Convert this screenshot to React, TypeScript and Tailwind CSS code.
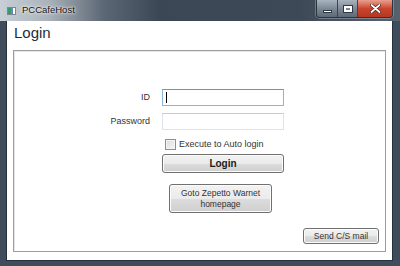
import React from "react";

const font = { fontFamily: '"Liberation Sans", Arial, sans-serif' };

function CaptionButtons() {
  return (
    <div className="absolute right-[7px] top-0 flex h-[18px] overflow-hidden rounded-b-[4px] border border-t-0 border-[#2b3540] shadow-[0_0_0_1px_rgba(255,255,255,0.25)]">
      <div className="flex w-[21px] items-end justify-center border-r border-[#3a4552] bg-gradient-to-b from-[#aab4be] via-[#7d8995] to-[#5d6a77] pb-[4px]">
        <div className="h-[3px] w-[9px] border border-[#2e3944] bg-white" />
      </div>
      <div className="flex w-[20px] items-center justify-center border-r border-[#3a4552] bg-gradient-to-b from-[#aab4be] via-[#7d8995] to-[#5d6a77]">
        <div className="h-[6px] w-[8px] border-2 border-white shadow-[0_0_0_1px_#2e3944]" />
      </div>
      <div className="flex w-[34px] items-center justify-center bg-gradient-to-b from-[#e7a08e] via-[#c9452f] to-[#b8361f]">
        <svg width="11" height="9" viewBox="0 0 11 9">
          <path d="M1.5 1 L9.5 8 M9.5 1 L1.5 8" stroke="#4a1a12" strokeWidth="3.2" strokeLinecap="round" />
          <path d="M1.5 1 L9.5 8 M9.5 1 L1.5 8" stroke="#ffffff" strokeWidth="1.8" strokeLinecap="round" />
        </svg>
      </div>
    </div>
  );
}

function Button({ className, children }: { className: string; children: React.ReactNode }) {
  return (
    <button
      className={`flex items-center justify-center rounded-[3px] border border-[#707070] bg-[linear-gradient(#f2f2f2_0%,#ebebeb_50%,#dddddd_50%,#cfcfcf_100%)] text-[#1a1a1a] shadow-[inset_0_0_0_1px_#fcfcfc] ${className}`}
    >
      {children}
    </button>
  );
}

export default function App() {
  return (
    <div
      style={font}
      className="relative flex h-[266px] w-[400px] flex-col overflow-hidden bg-[#3e4c5b]"
    >
      {/* title bar */}
      <div className="relative flex h-[21px] shrink-0 items-center bg-[linear-gradient(90deg,#c8cfd6_0%,#aab3bb_12%,#5b6774_26%,#3b4755_40%,#3d4957_75%,#56626e_100%)] pl-[7px]">
        <div className="flex h-[8px] w-[9px] border border-[#7d8790] bg-white">
          <div className="h-full w-[3px] bg-[#3c9a6a]" />
          <div className="h-full w-[2px] bg-[#5a8fc6]" />
        </div>
        <span className="ml-[6px] text-[9.5px] text-[#111] [text-shadow:0_0_4px_#ffffff,0_0_2px_#ffffff]">
          PCCafeHost
        </span>
        <CaptionButtons />
      </div>

      {/* client area */}
      <div className="ml-[7px] mr-[8px] mb-[6px] flex flex-1 flex-col bg-white shadow-[0_0_0_1px_#26313c]">
        <div className="pl-[7px] pt-[3px] text-[15px] leading-[18px] text-[#1e2c3a]">Login</div>

        <div className="mx-[6px] mb-[8px] mt-[8px] flex flex-1 flex-col border border-[#9d9d9d] shadow-[inset_1px_1px_0_#e6e6e6]">
          <div className="grid grid-cols-[136px_122px] gap-x-[12px] pt-[38px] text-[9px] text-[#333333]">
            <div className="flex h-[17px] items-center justify-end text-[#333333]">ID</div>
            <div className="flex h-[17px] items-center border border-[#8ab5df] border-t-[#5b98d2] bg-white pl-[3px]">
              <div className="h-[11px] w-px bg-black" />
            </div>

            <div className="mt-[7px] flex h-[17px] items-center justify-end">Password</div>
            <div className="mt-[7px] h-[17px] border border-[#dde3e8] border-t-[#c5ccd3] bg-white" />

            <div />
            <div className="mt-[7px] flex h-[15px] items-center gap-[3px] pl-[3px]">
              <div className="h-[11px] w-[11px] border border-[#8e8f8f] bg-gradient-to-br from-[#dcdcdc] to-[#f7f7f7] shadow-[inset_0_0_0_1px_#f4f4f4]" />
              <span>Execute to Auto login</span>
            </div>

            <div />
            <Button className="mt-[2px] h-[19px] text-[10px] font-bold">Login</Button>
          </div>

          <Button className="ml-[155px] mt-[11px] h-[29px] w-[103px] flex-col text-[8.5px] leading-[11px] text-[#333]">
            <span>Goto Zepetto Warnet</span>
            <span>homepage</span>
          </Button>

          <Button className="mb-[7px] mr-[6px] mt-auto h-[16px] w-[76px] self-end text-[8.5px] text-[#333]">
            Send C/S mail
          </Button>
        </div>
      </div>
    </div>
  );
}
